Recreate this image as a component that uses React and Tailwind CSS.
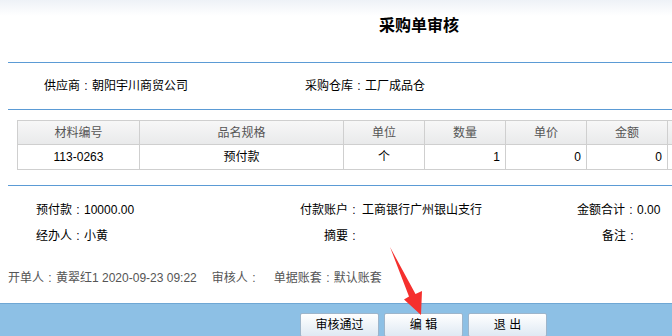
import React from 'react';

const columns = [
    { label: '材料编号', width: 'w-[122px]' },
    { label: '品名规格', width: 'w-[204px]' },
    { label: '单位', width: 'w-[81px]' },
    { label: '数量', width: 'w-[81px]' },
    { label: '单价', width: 'w-[81px]' },
    { label: '金额', width: 'w-[81px]' },
    { label: '', width: 'w-[60px]' },
];

const row = [
    { value: '113-0263', align: 'text-center' },
    { value: '预付款', align: 'text-center' },
    { value: '个', align: 'text-center' },
    { value: '1', align: 'text-right pr-[5px]' },
    { value: '0', align: 'text-right pr-[5px]' },
    { value: '0', align: 'text-right pr-[5px]' },
    { value: '', align: '' },
];

const buttons = ['审核通过', '编 辑', '退 出'];

// centered full-width colon, like the old SimSun look
const C = () => <span className="inline-block w-[12px] text-center">:</span>;

const App = () => {
    return (
        <div className="relative w-[672px] h-[336px] overflow-hidden bg-white text-[12px] text-black font-['Liberation_Sans','Noto_Sans_CJK_SC',sans-serif]">
            {/* Header */}
            <div className="h-[62px] pt-[16px] pl-[379px] bg-[linear-gradient(to_bottom,#eef2f7_0px,#ffffff_16px)]">
                <h1 className="text-[16px] leading-[20px] font-bold">采购单审核</h1>
            </div>
            <div className="ml-[8px] h-px bg-[#5b9bd5]" />

            {/* Supplier row */}
            <div className="flex items-center h-[46px]">
                <div className="w-[305px] pl-[44px]">供应商<C />朝阳宇川商贸公司</div>
                <div>采购仓库<C />工厂成品仓</div>
            </div>
            <div className="ml-[8px] h-px bg-[#5b9bd5]" />

            {/* Items table */}
            <div className="pt-[10px] pl-[17px] h-[75px]">
                <div className="flex w-[800px] border-t border-l border-[#cfcfcf]">
                    {columns.map((c, i) => (
                        <div key={i} className={`${c.width} shrink-0 h-[24px] leading-[24px] text-center text-[#555] border-r border-b border-[#cfcfcf] bg-[linear-gradient(to_bottom,#f7f7f7,#e9eaeb)]`}>
                            {c.label}
                        </div>
                    ))}
                </div>
                <div className="flex w-[800px] border-l border-[#cfcfcf]">
                    {row.map((c, i) => (
                        <div key={i} className={`${columns[i].width} ${c.align} shrink-0 h-[25px] leading-[25px] border-r border-b border-[#cfcfcf]`}>
                            {c.value}
                        </div>
                    ))}
                </div>
            </div>
            <div className="ml-[8px] h-px bg-[#5b9bd5]" />

            {/* Payment info */}
            <div className="pt-[11px]">
                <div className="flex h-[26px] items-center">
                    <div className="w-[264px] pl-[36px]">预付款<C />10000.00</div>
                    <div className="w-[96px] text-right">付款账户<C /></div>
                    <div className="w-[180px] pl-[2px]">工商银行广州银山支行</div>
                    <div className="w-[97px] text-right">金额合计<C /></div>
                    <div>0.00</div>
                </div>
                <div className="flex h-[26px] items-center">
                    <div className="w-[264px] pl-[36px]">经办人<C />小黄</div>
                    <div className="w-[96px] text-right">摘要<C /></div>
                    <div className="w-[180px] pl-[2px]" />
                    <div className="w-[98px] text-right">备注<C /></div>
                    <div />
                </div>
            </div>

            {/* Creator line */}
            <div className="flex items-center h-[30px] mt-[14px] pl-[8px] text-[#555]">
                <span>开单人<C />黄翠红1 2020-09-23 09:22</span>
                <span className="ml-[15px]">审核人<C /></span>
                <span className="ml-[14px]">单据账套<C />默认账套</span>
            </div>

            {/* Bottom bar */}
            <div className="absolute left-0 right-0 bottom-0 h-[33px] bg-[#8dc0e5] border-t border-[#6fa7d4] flex gap-[5px] pl-[300px] pt-[9px]">
                {buttons.map((b) => (
                    <button
                        key={b}
                        type="button"
                        className="w-[79px] h-[24px] shrink-0 rounded-[2px] border border-[#9db5cb] bg-[linear-gradient(to_bottom,#ffffff,#dfe9f3)] text-[12px] text-black whitespace-pre"
                    >
                        {b}
                    </button>
                ))}
            </div>

            {/* Red annotation arrow */}
            <svg className="absolute left-0 top-0 pointer-events-none" width="672" height="336" viewBox="0 0 672 336">
                <polygon
                    points="390,247 415.5,294 422,291 421,315 404,299.5 409,296.5"
                    fill="#f5302e"
                />
            </svg>
        </div>
    );
};

export default App;
